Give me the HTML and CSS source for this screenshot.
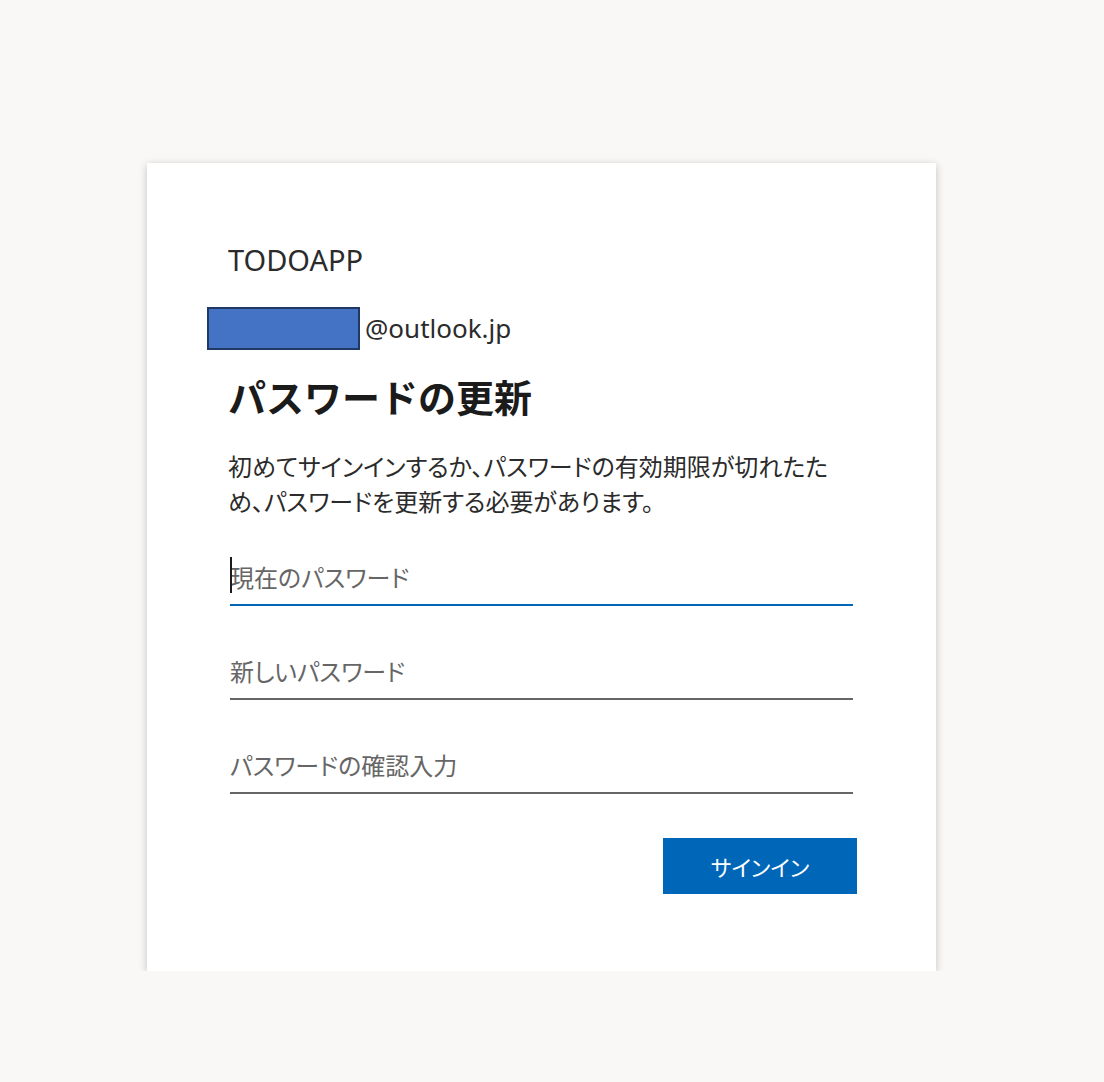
FILE: index.html
```html
<!DOCTYPE html>
<html lang="ja">
<head>
    <meta charset="UTF-8">
    <meta name="viewport" content="width=device-width, initial-scale=1.0">
    <title>パスワードの更新 - TODOAPP</title>
    <link rel="stylesheet" href="styles.css">
</head>
<body>
    <div class="card">
        <div class="brand">TODOAPP</div>
        <div class="identity">
            <span class="redact"></span>
            <span class="email">@outlook.jp</span>
        </div>
        <h1 class="title">パスワードの更新</h1>
        <p class="desc">初めてサインインするか、パスワードの有効期限が切れたため、パスワードを更新する必要があります。</p>

        <div class="field active">
            <span class="caret"></span>
            <input type="password" placeholder="現在のパスワード">
        </div>
        <div class="field">
            <input type="password" placeholder="新しいパスワード">
        </div>
        <div class="field">
            <input type="password" placeholder="パスワードの確認入力">
        </div>

        <div class="actions">
            <button type="button">サインイン</button>
        </div>
    </div>
</body>
</html>
```

FILE: styles.css
```css
body {
    margin: 0;
    background-color: #f9f8f7;
    font-family: "Noto Sans", "Noto Sans CJK JP", sans-serif;
    color: #1b1b1b;
}
.card {
    box-sizing: border-box;
    width: 789px;
    height: 808px;
    margin: 163px 0 0 147px;
    padding: 80px 79px 0 81px;
    background-color: #fff;
    box-shadow: 0 2px 8px rgba(0, 0, 0, 0.22);
}
.brand {
    font-size: 29px;
    line-height: 34px;
    color: #2b2b2b;
}
.identity {
    display: flex;
    align-items: center;
    height: 44px;
    margin-top: 29px;
}
.redact {
    box-sizing: border-box;
    width: 153px;
    height: 43px;
    margin-left: -21px;
    background-color: #4472c4;
    border: 2px solid #1f3864;
}
.email {
    margin-left: 5px;
    font-size: 26px;
    color: #2b2b2b;
}
.title {
    margin: 22px 0 0;
    font-family: "Noto Sans CJK JP", sans-serif;
    font-size: 38px;
    line-height: 48px;
    font-weight: bold;
}
.desc {
    width: 610px;
    margin: 28px 0 0;
    font-family: "Noto Sans CJK JP", sans-serif;
    font-size: 24px;
    line-height: 35px;
    font-feature-settings: "palt";
    color: #2b2b2b;
}
.field {
    position: relative;
    margin: 44px 0 0 2px;
    width: 623px;
}
.field.active {
    margin-top: 38px;
}
.field input {
    box-sizing: border-box;
    display: block;
    width: 100%;
    height: 50px;
    padding: 0 0 8px;
    border: none;
    border-bottom: 2px solid #666;
    outline: none;
    background: transparent;
    font-family: "Noto Sans CJK JP", sans-serif;
    font-size: 24px;
    font-feature-settings: "palt";
    color: #1b1b1b;
}
.field input::placeholder {
    color: #666;
}
.field.active input {
    border-bottom-color: #0067b8;
}
.caret {
    position: absolute;
    left: 0;
    top: 1px;
    width: 2px;
    height: 36px;
    background-color: #1b1b1b;
}
.actions {
    display: flex;
    justify-content: flex-end;
    margin-top: 44px;
}
button {
    width: 194px;
    height: 56px;
    border: none;
    background-color: #0067b8;
    color: #fff;
    font-family: "Noto Sans CJK JP", sans-serif;
    font-size: 22px;
    font-feature-settings: "palt";
    cursor: pointer;
}
```
